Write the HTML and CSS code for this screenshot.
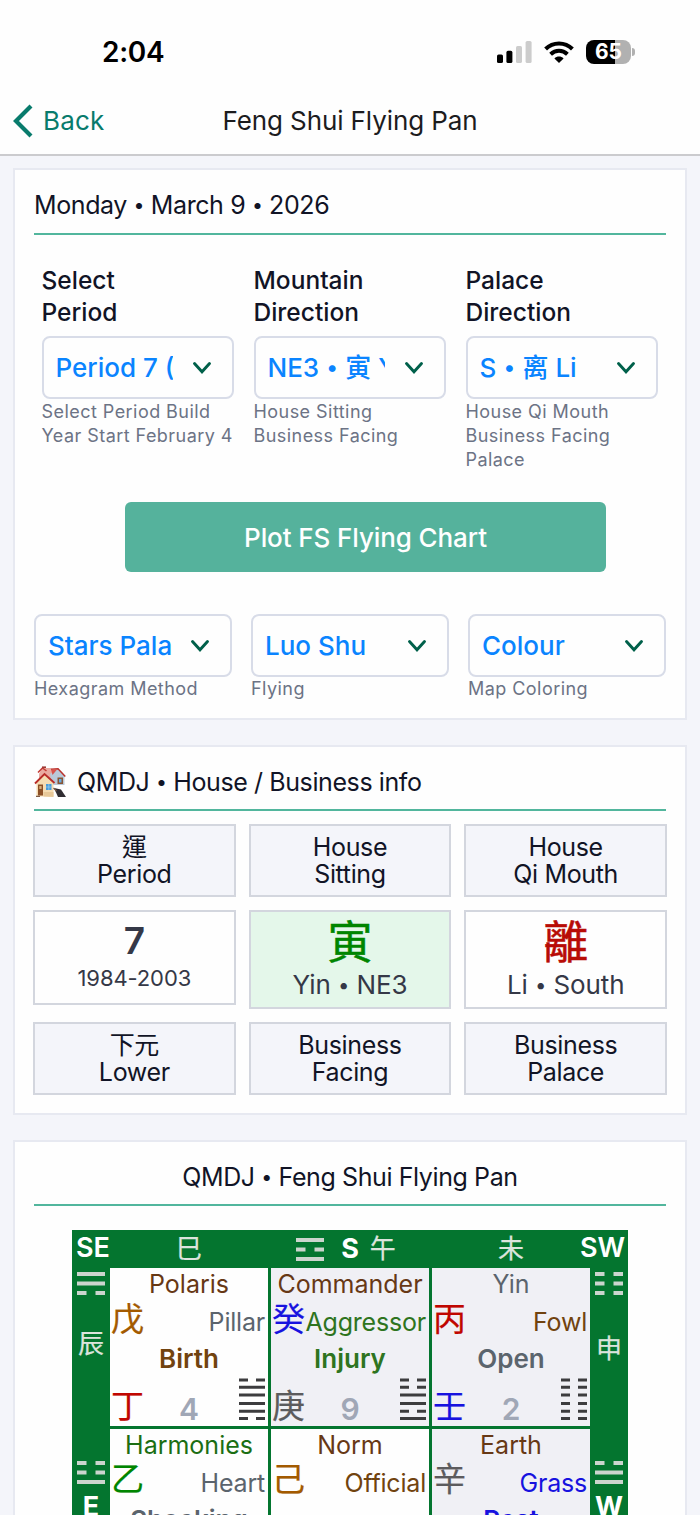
FILE: index.html
```html
<!DOCTYPE html>
<html lang="en">
<head>
<meta charset="utf-8">
<title>Feng Shui Flying Pan</title>
<link rel="stylesheet" href="styles.css">
</head>
<body>
<svg class="defs" width="0" height="0">
  <symbol id="chev" viewBox="0 0 20 14"><path d="M2.5 2.5 10 10.8 17.5 2.5" fill="none" stroke="#00604a" stroke-width="2.9" stroke-linecap="round" stroke-linejoin="miter"/></symbol>
</svg>
<header class="top">
  <div class="status">
    <span class="time">2:04</span>
    <div class="indicators">
      <svg class="signal" viewBox="0 0 36 22" width="36" height="22"><rect x="0" y="13.6" width="6" height="8.4" rx="1.6"/><rect x="9.4" y="9.8" width="6" height="12.2" rx="1.6"/><rect x="19" y="5" width="6" height="17" rx="1.6" fill="#ccc"/><rect x="28.6" y="0" width="6" height="22" rx="1.6" fill="#ccc"/></svg>
      <svg class="wifi" viewBox="0 0 30 22" width="30" height="22"><g fill="none" stroke="#000" stroke-width="4"><path d="M1.600 8C9 .6 21 .6 28.400 8"/><path d="M6.600 13.200C11.400 8.700 18.600 8.700 23.400 13.200"/></g><path d="M15 22 10.400 17.400C13 15 17 15 19.600 17.400Z"/></svg>
      <div class="battery"><span class="level">65</span><i class="nub"></i></div>
    </div>
  </div>
  <nav class="nav">
    <a class="back"><svg viewBox="0 0 20 34" width="20" height="34"><path d="M18 2 3 17 18 32" fill="none" stroke="#087b6c" stroke-width="4.200"/></svg><span>Back</span></a>
    <h1 class="title">Feng Shui Flying Pan</h1>
    <span></span>
  </nav>
</header>
<main class="page">
  <section class="card setup">
    <h2 class="heading date"><span>Monday <b>•</b> March 9 <b>•</b> 2026</span></h2>
    <div class="fields three">
      <div class="field"><label>Select<br>Period</label><div class="select"><span class="value v1">Period 7 (1984-2003)</span><svg><use href="#chev"/></svg></div><p class="help">Select Period Build<br>Year Start February 4</p></div>
      <div class="field"><label>Mountain<br>Direction</label><div class="select"><span class="value v2">NE3 <b>•</b> 寅 Yin</span><svg><use href="#chev"/></svg></div><p class="help">House Sitting<br>Business Facing</p></div>
      <div class="field"><label>Palace<br>Direction</label><div class="select"><span class="value v3">S <b>•</b> 离 Li</span><svg><use href="#chev"/></svg></div><p class="help">House Qi Mouth<br>Business Facing<br>Palace</p></div>
    </div>
    <button class="plot">Plot FS Flying Chart</button>
    <div class="fields options">
      <div class="field"><div class="select"><span class="value">Stars Palace</span><svg><use href="#chev"/></svg></div><p class="help">Hexagram Method</p></div>
      <div class="field"><div class="select"><span class="value">Luo Shu</span><svg><use href="#chev"/></svg></div><p class="help">Flying</p></div>
      <div class="field"><div class="select"><span class="value">Colour</span><svg><use href="#chev"/></svg></div><p class="help">Map Coloring</p></div>
    </div>
  </section>

  <section class="card info">
    <h2 class="heading"><svg class="houses" viewBox="0 0 32 32" width="32" height="32">
      <path d="M5 8 8 2h9l3 6v7H5z" fill="#eaa9a0"/><path d="M4 6.500 8.500 2 12.500 5" fill="none" stroke="#c33a34" stroke-width="1.500"/><path d="M8 1.200h4" stroke="#9c3a35" stroke-width="1.600"/>
      <path d="M16 8 24 3l6.500 7v9H18z" fill="#b9c9d8"/><path d="M17 3.200 24 2.800 31.300 10.500" fill="none" stroke="#b8322d" stroke-width="1.500"/><path d="M17 3.500 23.500 3l-5 6z" fill="#d8534b"/><rect x="23.500" y="11.500" width="5.500" height="6.500" fill="#8a5432"/><rect x="25" y="13" width="2.500" height="3.500" fill="#64abe3"/>
      <path d="M20 22 27 23.500 32 31 24 31z" fill="#302d32"/><path d="M2.500 16 11 8.500l8.500 7.500V30.500h-17z" fill="#f5dcb2"/><path d="M9.500 26v4.500l10 .5v-5z" fill="#e7c899"/>
      <path d="M1 17.500 10.500 8 20.500 17" fill="none" stroke="#b92c28" stroke-width="1.900"/>
      <rect x="4" y="18.500" width="5" height="11" fill="#8c5027"/><rect x="5.300" y="20" width="2.300" height="3" fill="#d7ad77"/><rect x="12" y="18" width="5.500" height="6" fill="#4a9dda"/><path d="M14.800 18v6M12 21h5.500" stroke="#9bd0f2" stroke-width=".7"/><path d="M2 30.300h4M19.500 22l3 3" stroke="#7d5a45" stroke-width="1.300"/>
    </svg><span>QMDJ <b>•</b> House / Business info</span></h2>
    <div class="boxes">
      <div class="box head">運<br>Period</div><div class="box head">House<br>Sitting</div><div class="box head">House<br>Qi Mouth</div>
      <div class="box short"><strong class="num">7</strong><span class="years">1984-2003</span></div>
      <div class="box green"><strong class="glyph">寅</strong><span class="place">Yin <b>•</b> NE3</span></div>
      <div class="box"><strong class="glyph red">離</strong><span class="place">Li <b>•</b> South</span></div>
      <div class="box head">下元<br>Lower</div><div class="box head">Business<br>Facing</div><div class="box head">Business<br>Palace</div>
    </div>
  </section>

  <section class="card pan">
    <h2 class="heading center"><span>QMDJ <b>•</b> Feng Shui Flying Pan</span></h2>
    <div class="chart">
      <div class="edge">
        <span class="corner">SE</span><span class="branch">巳</span>
        <span class="south"><svg class="tri" viewBox="0 0 28 23"><path d="M0 2h28M0 11.500h9.500M18.500 11.500h9.500M0 21h28"/></svg><strong>S</strong><span class="branch">午</span></span>
        <span class="branch">未</span><span class="corner sw">SW</span>
      </div>
      <div class="middle">
        <div class="side">
          <svg class="tri" viewBox="0 0 28 23"><path d="M0 2h28M0 11.500h28M0 21h9.500M18.500 21h9.500"/></svg><span class="branch east">辰</span>
          <svg class="tri" viewBox="0 0 28 23"><path d="M0 2h9.500M18.500 2h9.500M0 11.500h9.500M18.500 11.500h9.500M0 21h28"/></svg><strong>E</strong>
        </div>
        <div class="palaces">
          <div class="palace"><div class="god brown">Polaris</div><div class="star"><i class="amber">戊</i><span class="slate">Pillar</span></div><div class="door brown2">Birth</div><div class="base"><i class="red">丁</i><strong>4</strong><svg class="hex" viewBox="0 0 26 42"><path d="M0 2h9M17 2h9M0 9.300h26M0 17h26M0 25.600h26M0 33.200h26M0 40.500h9M17 40.500h9"/></svg></div></div>
          <div class="palace tint"><div class="god brown">Commander</div><div class="star"><i class="blue">癸</i><span class="moss">Aggressor</span></div><div class="door moss">Injury</div><div class="base"><i class="gray">庚</i><strong>9</strong><svg class="hex" viewBox="0 0 26 42"><path d="M0 2h9M17 2h9M0 9.300h9M17 9.300h9M0 17h26M0 25.600h26M0 33.200h9M17 33.200h9M0 40.500h26"/></svg></div></div>
          <div class="palace tint"><div class="god slate">Yin</div><div class="star"><i class="red">丙</i><span class="brown2">Fowl</span></div><div class="door slate">Open</div><div class="base"><i class="blue">壬</i><strong>2</strong><svg class="hex" viewBox="0 0 26 42"><path d="M0 2h9M17 2h9M0 9.300h9M17 9.300h9M0 17h9M17 17h9M0 25.600h9M17 25.600h9M0 33.200h9M17 33.200h9M0 40.500h9M17 40.500h9"/></svg></div></div>
          <div class="palace"><div class="god forest">Harmonies</div><div class="star"><i class="leaf">乙</i><span class="slate">Heart</span></div><div class="door slate">Shocking</div></div>
          <div class="palace"><div class="god brown">Norm</div><div class="star"><i class="amber">己</i><span class="brown2">Official</span></div></div>
          <div class="palace tint"><div class="god brown">Earth</div><div class="star"><i class="gray">辛</i><span class="blue">Grass</span></div><div class="door blue">Rest</div></div>
        </div>
        <div class="side">
          <svg class="tri" viewBox="0 0 28 23"><path d="M0 2h9.500M18.500 2h9.500M0 11.500h9.500M18.500 11.500h9.500M0 21h9.500M18.500 21h9.500"/></svg><span class="branch west">申</span>
          <svg class="tri" viewBox="0 0 28 23"><path d="M0 2h9.500M18.500 2h9.500M0 11.500h28M0 21h28"/></svg><strong>W</strong>
        </div>
      </div>
    </div>
  </section>
</main>
</body>
</html>
```
FILE: styles.css
```css
* { box-sizing: border-box; }
body { margin: 0; width: 700px; height: 1515px; overflow: hidden; background: #f4f5fa; color: #111426; font-family: Inter, "Noto Sans CJK TC", sans-serif; font-size: 25px; }
h1, h2, p { margin: 0; font-weight: 400; }
b { font-weight: 400; font-size: .78em; line-height: 1; vertical-align: .1em; }
i { font-style: normal; }
.defs { display: block; height: 0; }

.top { height: 156px; background: #fefefe; border-bottom: 2px solid #cbcbce; }
.status { height: 86px; padding: 17px 65px 0 102px; display: flex; justify-content: space-between; align-items: center; }
.time { font-size: 28px; font-weight: 600; color: #000; letter-spacing: -.3px; }
.indicators { display: flex; align-items: center; }
.wifi { margin-left: 11px; }
.battery { display: flex; align-items: center; margin-left: 12px; }
.level { width: 45px; height: 24px; border-radius: 8px; background: linear-gradient(90deg, #000 65%, #b1b1b1 65%); color: #fff; font-weight: 700; font-size: 21px; line-height: 24px; text-align: center; }
.nub { width: 3px; height: 8px; margin-left: 1px; border-radius: 0 4px 4px 0; background: #b1b1b1; }
.nav { height: 68px; padding: 1px 13px 0; display: grid; grid-template-columns: 1fr auto 1fr; align-items: center; }
.back { display: flex; align-items: center; gap: 10px; color: #087b6c; font-size: 26px; letter-spacing: .15px; }
.title { font-size: 26px; color: #1c1c1e; letter-spacing: -.1px; }

.page { padding: 12px 13px 0; display: flex; flex-direction: column; gap: 25px; }
.card { background: #fefefe; border: 2px solid #e7e9f1; padding: 0 19px; }
.heading { height: 64px; padding-top: 7px; border-bottom: 2px solid #52b69d; font-size: 25px; line-height: 40px; letter-spacing: -.4px; white-space: nowrap; display: flex; align-items: center; }
.date { height: 65px; padding-top: 7px; }
.center { justify-content: center; }

.setup { height: 552px; }
.fields { display: grid; grid-template-columns: repeat(3, 1fr); }
.three { padding: 29px 8.500px 0 7.500px; gap: 20px; height: 267px; }
.options { gap: 19px; margin-top: 42px; }
.field label { display: block; line-height: 32px; font-weight: 500; font-size: 24.500px; margin-bottom: 8px; }
.select { height: 63px; border: 2px solid #d8dce8; border-radius: 8px; padding: 0 20px 0 12px; display: flex; align-items: center; justify-content: space-between; color: #0a84ff; font-size: 26px; font-weight: 500; }
.select b { font-size: .84em; }
.value { width: 117px; overflow: hidden; white-space: nowrap; line-height: 40px; }
.options .value { width: 124px; }
.select svg { width: 20px; height: 14px; flex: none; }
.help { font-size: 18px; line-height: 24px; margin-top: 1px; color: #6c7385; white-space: nowrap; letter-spacing: .45px; }
.options .help { margin-top: 0; }
.plot { display: block; width: 481px; height: 70px; margin: 0 0 0 91px; padding: 1px 0 0; border: 0; border-radius: 6px; background: #55b29c; color: #fff; font: 500 26px Inter, sans-serif; letter-spacing: -.1px; }

.info { height: 370px; }
.houses { margin-right: 11px; }
.boxes { display: grid; grid-template-columns: repeat(3, 1fr); gap: 13px; margin: 13px -1px 0; align-items: start; }
.box { height: 99.500px; border: 2px solid #d3d6de; display: flex; flex-direction: column; align-items: center; color: #353847; }
.head { display: block; height: 72.500px; padding-top: 8px; background: #f4f5fa; color: #111426; line-height: 27px; text-align: center; letter-spacing: -.35px; }
.short { height: 95.500px; }
.green { background: #e4f7ea; }
.num { font-size: 37px; line-height: 46px; font-weight: 600; padding-top: 6px; }
.years { font-size: 22px; line-height: 28px; letter-spacing: -.1px; }
.glyph { font-size: 45px; line-height: 48px; font-weight: 400; -webkit-text-stroke: .5px currentColor; color: #008500; padding-top: 7px; }
.glyph.red { color: #b80c06; }
.place { font-size: 26px; line-height: 36px; letter-spacing: -.1px; }

.pan { height: 375px; border-bottom: 0; overflow: hidden; }
.chart { width: 556px; margin: 24px 0 0 38px; background: #04752f; }
.edge { height: 38px; display: grid; grid-template-columns: 38px 158px 1fr 158px 38px; align-items: center; justify-items: center; color: #dce4dd; }
.edge .corner { color: #fff; font-size: 27px; line-height: 30px; padding: 0 0 2px 4px; font-weight: 600; justify-self: start; }
.edge .sw { justify-self: end; padding: 0 3px 2px 0; }
.edge .branch { line-height: 30px; padding-bottom: 1px; }
.branch { font-size: 26px; -webkit-text-stroke: .25px currentColor; }
.south { display: flex; align-items: center; margin-right: 8px; }
.south strong { margin: 0 11px 1px 17px; }
.south strong, .side strong { font-weight: 700; font-size: 27px; color: #fff; }
.tri { width: 28px; height: 23px; display: block; flex: none; fill: none; stroke: #ccd5ce; stroke-width: 4; }
.middle { display: grid; grid-template-columns: 38px 480px 38px; height: 320px; }
.side { display: flex; flex-direction: column; align-items: center; padding-top: 4px; }
.side .branch { color: #dce4dd; line-height: 40px; height: 166px; padding-top: 29px; }
.side .west { padding-top: 34px; }
.side strong { margin-top: 5px; line-height: 36px; }
.palaces { display: grid; grid-template-columns: repeat(3, 158px); grid-auto-rows: 157.500px; gap: 3px; }
.palace { background: #fefefe; display: grid; grid-template-rows: 33px 37px 40px 47px; text-align: center; line-height: 33px; }
.tint { background: #f0f0f5; }
.star { display: flex; justify-content: space-between; align-items: center; padding: 0 3px 0 1px; letter-spacing: -.2px; }
.star span { padding-top: 6px; }
.star i, .base i { font-size: 33px; font-weight: 400; line-height: 36px; -webkit-text-stroke: .2px currentColor; }
.star i { margin-top: -2px; }
.door { font-weight: 600; line-height: 42px; font-size: 26px; }
.base { display: grid; grid-template-columns: 50px 1fr 50px; align-items: start; padding: 0 3px 0 1px; }
.base i { justify-self: start; padding-top: 10px; }
.base strong { font-size: 30px; font-weight: 600; color: #a0a7b6; padding: 15px 0 0 2px; }
.hex { width: 26px; height: 42px; justify-self: end; fill: none; stroke: #3c3c3e; stroke-width: 3; }
.brown { color: #673815; }
.brown2 { color: #71430f; }
.amber { color: #a35a00; }
.slate { color: #5b646d; }
.moss { color: #2e7420; }
.forest { color: #1b6e13; }
.leaf { color: #008500; }
.blue { color: #1712df; }
.gray { color: #5c5b5d; }
.palace .red { color: #c00600; }
```
